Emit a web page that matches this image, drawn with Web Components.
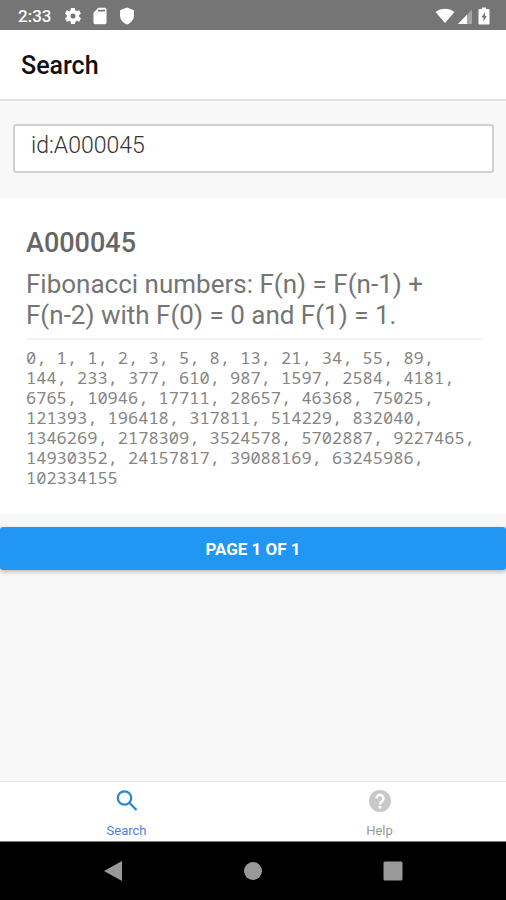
<!DOCTYPE html>
<html lang="en">
<head>
<meta charset="utf-8">
<meta name="viewport" content="width=device-width, initial-scale=1">
<title>Search</title>
<style>
html, body { height: 100%; }
body { margin: 0; font-family: Roboto, "Liberation Sans", sans-serif; background: #f8f8f8; }
</style>
</head>
<body>
<search-app></search-app>
<script>
const define = (name, html) => customElements.define(name, class extends HTMLElement {
  constructor() {
    super();
    const root = this.attachShadow({ mode: "open" });
    const t = document.createElement("template");
    t.innerHTML = html;
    root.append(t.content.cloneNode(true));
  }
});

define("status-bar", `
<style>
:host { display: flex; align-items: center; justify-content: space-between; height: 30px; box-sizing: border-box; padding: 1px 13px 0 18px; background: #757575; color: #fff; font-size: 17px; font-weight: 500; line-height: 20px; }
.left, .right { display: flex; align-items: center; }
.left svg { margin-left: 9px; }
.left time + svg { margin-left: 13px; }
.right { gap: 2px; }
svg { display: block; fill: #fff; }
</style>
<div class="left"><time>2:33</time>
<svg width="18" height="18" viewBox="1 1 22 22"><path d="M19.4 13c0-.3.1-.6.1-1s0-.7-.1-1l2.100-1.600c.2-.2.2-.4.1-.6l-2-3.500c-.1-.2-.4-.3-.6-.2l-2.500 1c-.5-.4-1.100-.7-1.700-1l-.4-2.600c0-.2-.2-.4-.5-.4h-4c-.2 0-.4.2-.5.4l-.4 2.600c-.6.300-1.200.6-1.700 1l-2.500-1c-.2-.1-.5 0-.6.2l-2 3.500c-.1.2-.1.500.1.600L4.500 11c0 .3-.1.600-.1 1s0 .7.1 1l-2.100 1.600c-.2.2-.2.4-.1.6l2 3.500c.1.2.4.300.6.2l2.500-1c.5.4 1.100.7 1.700 1l.4 2.600c0 .2.2.4.5.4h4c.2 0 .4-.2.5-.4l.4-2.600c.6-.3 1.200-.6 1.700-1l2.500 1c.2.1.5 0 .6-.2l2-3.500c.1-.2.1-.5-.1-.6zM12 15.100a3.100 3.100 0 1 1 0-6.200 3.100 3.100 0 0 1 0 6.200z"/></svg>
<svg width="18" height="18" viewBox="1 1 22 22"><path fill-rule="evenodd" d="M18 2h-8L4 8v12a2 2 0 0 0 2 2h12a2 2 0 0 0 2-2V4a2 2 0 0 0-2-2zM9.500 4.500h8.500V6.500h-8.500z"/></svg>
<svg width="18" height="18" viewBox="1 1 22 22"><path d="M12 1.500 3.500 5v6.500c0 5 3.600 9.300 8.500 11 4.900-1.700 8.500-6 8.500-11V5z"/></svg>
</div>
<div class="right">
<svg width="20" height="18" viewBox="0 0 20 18"><path d="M0.500 5C6 .500 14 .500 19.500 5L10 16z"/></svg>
<svg width="16" height="18" viewBox="0 0 16 18"><path opacity=".35" d="M1 17 15 2.500V17z"/><path d="M1 17 10 7.700V17z"/></svg>
<svg width="18" height="18" viewBox="-3 0 18 18"><path fill-rule="evenodd" d="M4 .500h4v1.500h2.500q1 0 1 1v13.500q0 1-1 1h-9q-1 0-1-1V3q0-1 1-1H4zM7 5 3.500 10.500h2V14.500L8.700 9H7z"/></svg>
</div>`);

define("page-header", `
<style>
:host { display: block; background: #fff; border-bottom: 2px solid #e0e0e0; padding: 21px 21px 19px; }
h1 { margin: 0; color: #111; font-size: 25px; line-height: 29px; font-weight: 500; }
</style><h1><slot></slot></h1>`);

define("search-field", `
<style>
:host { display: block; padding: 23px 12px 25px 13px; }
input { display: block; width: 100%; height: 49px; box-sizing: border-box; margin: 0; padding: 0 16px 6px; border: 2px solid #d0d0d0; border-radius: 3px; background: #fff; color: #333; font: 300 23px/28px Roboto, "Liberation Sans", sans-serif; outline: 0; }
</style><input type="text" aria-label="Search sequences" value="id:A000045">`);

define("sequence-card", `
<style>
:host { display: block; background: #fff; padding: 29px 23px 26px 26px; color: #666; }
h2 { margin: 0 0 10px; font-size: 27px; line-height: 32px; font-weight: 500; }
.name { margin: 0; padding-bottom: 7px; border-bottom: 2px solid #f3f3f3; color: #757575; font-size: 26px; line-height: 31px; font-weight: 400; }
.terms { margin: 8px 0 0; color: #858585; font: 17px/20px "Droid Sans Mono", "Noto Sans Mono", "DejaVu Sans Mono", monospace; }
</style>
<h2><slot name="id"></slot></h2><p class="name"><slot name="name"></slot></p><p class="terms"><slot></slot></p>`);

define("page-button", `
<style>
:host { display: block; padding-top: 13px; }
button { display: block; width: 100%; height: 43px; padding: 0; border: 0; border-radius: 3px; background: #2196f3; color: #fff; font: 700 17px/20px Roboto, "Liberation Sans", sans-serif; text-transform: uppercase; box-shadow: 0 2px 4px rgba(0,0,0,.25); }
</style><button type="button"><slot></slot></button>`);

define("tab-bar", `
<style>
:host { display: block; background: #fff; border-top: 1px solid #e8e8e8; border-bottom: 1px solid #777; }
nav { display: flex; }
</style><nav><slot></slot></nav>`);

define("tab-item", `
<style>
:host { flex: 1; display: block; color: #9a9a9a; }
:host([active]) { color: #4c80ee; }
a { display: flex; flex-direction: column; align-items: center; gap: 10px; padding: 7px 0 2px; color: inherit; text-decoration: none; font-size: 13px; line-height: 16px; }
</style><a href="#"><slot name="icon"></slot><span><slot></slot></span></a>`);

define("system-nav", `
<style>
:host { display: flex; justify-content: center; height: 58px; background: #000; }
button { flex: 0 1 140px; padding: 0; border: 0; background: none; display: flex; align-items: center; justify-content: center; }
svg { fill: #999; }
</style>
<button type="button" aria-label="Back"><svg width="20" height="22" viewBox="0 0 20 22"><path d="M1 11 19 1v20z"/></svg></button>
<button type="button" aria-label="Home"><svg width="20" height="20" viewBox="0 0 20 20"><circle cx="10" cy="10" r="9"/></svg></button>
<button type="button" aria-label="Overview"><svg width="20" height="20" viewBox="0 0 20 20"><rect x="0.500" y="0.500" width="19" height="19" rx="1.500"/></svg></button>`);

define("search-app", `
<style>
:host { display: flex; flex-direction: column; min-height: 100%; }
main { flex: 1; }
svg { display: block; }
.term { white-space: nowrap; }
</style>
<status-bar></status-bar>
<page-header>Search</page-header>
<main>
<search-field></search-field>
<sequence-card><span slot="id">A000045</span><span slot="name">Fibonacci numbers: F(n) = F(n-1) + <span class="term">F(n-2)</span> with F(0) = 0 and F(1) = 1.</span>0, 1, 1, 2, 3, 5, 8, 13, 21, 34, 55, 89, 144, 233, 377, 610, 987, 1597, 2584, 4181, 6765, 10946, 17711, 28657, 46368, 75025, 121393, 196418, 317811, 514229, 832040, 1346269, 2178309, 3524578, 5702887, 9227465, 14930352, 24157817, 39088169, 63245986, 102334155</sequence-card>
<page-button>Page 1 of 1</page-button>
</main>
<tab-bar>
<tab-item active><svg slot="icon" width="24" height="24" viewBox="0 0 24 24" fill="none" stroke="#2487d0" stroke-width="2.200"><circle cx="9.500" cy="9" r="6.700"/><path d="m14.300 13.800 7.200 7.200"/></svg>Search</tab-item>
<tab-item><svg slot="icon" width="24" height="24" viewBox="0 0 24 24"><circle cx="12" cy="12" r="11" fill="#c8c8c8"/><path fill="none" stroke="#fff" stroke-width="2.600" d="M8.500 9.500a3.500 3.500 0 1 1 5.800 2.600C13 13.200 12 13.700 12 15.700"/><rect x="10.700" y="17" width="2.600" height="2.500" fill="#fff"/></svg>Help</tab-item>
</tab-bar>
<system-nav></system-nav>`);
</script>
</body>
</html>
